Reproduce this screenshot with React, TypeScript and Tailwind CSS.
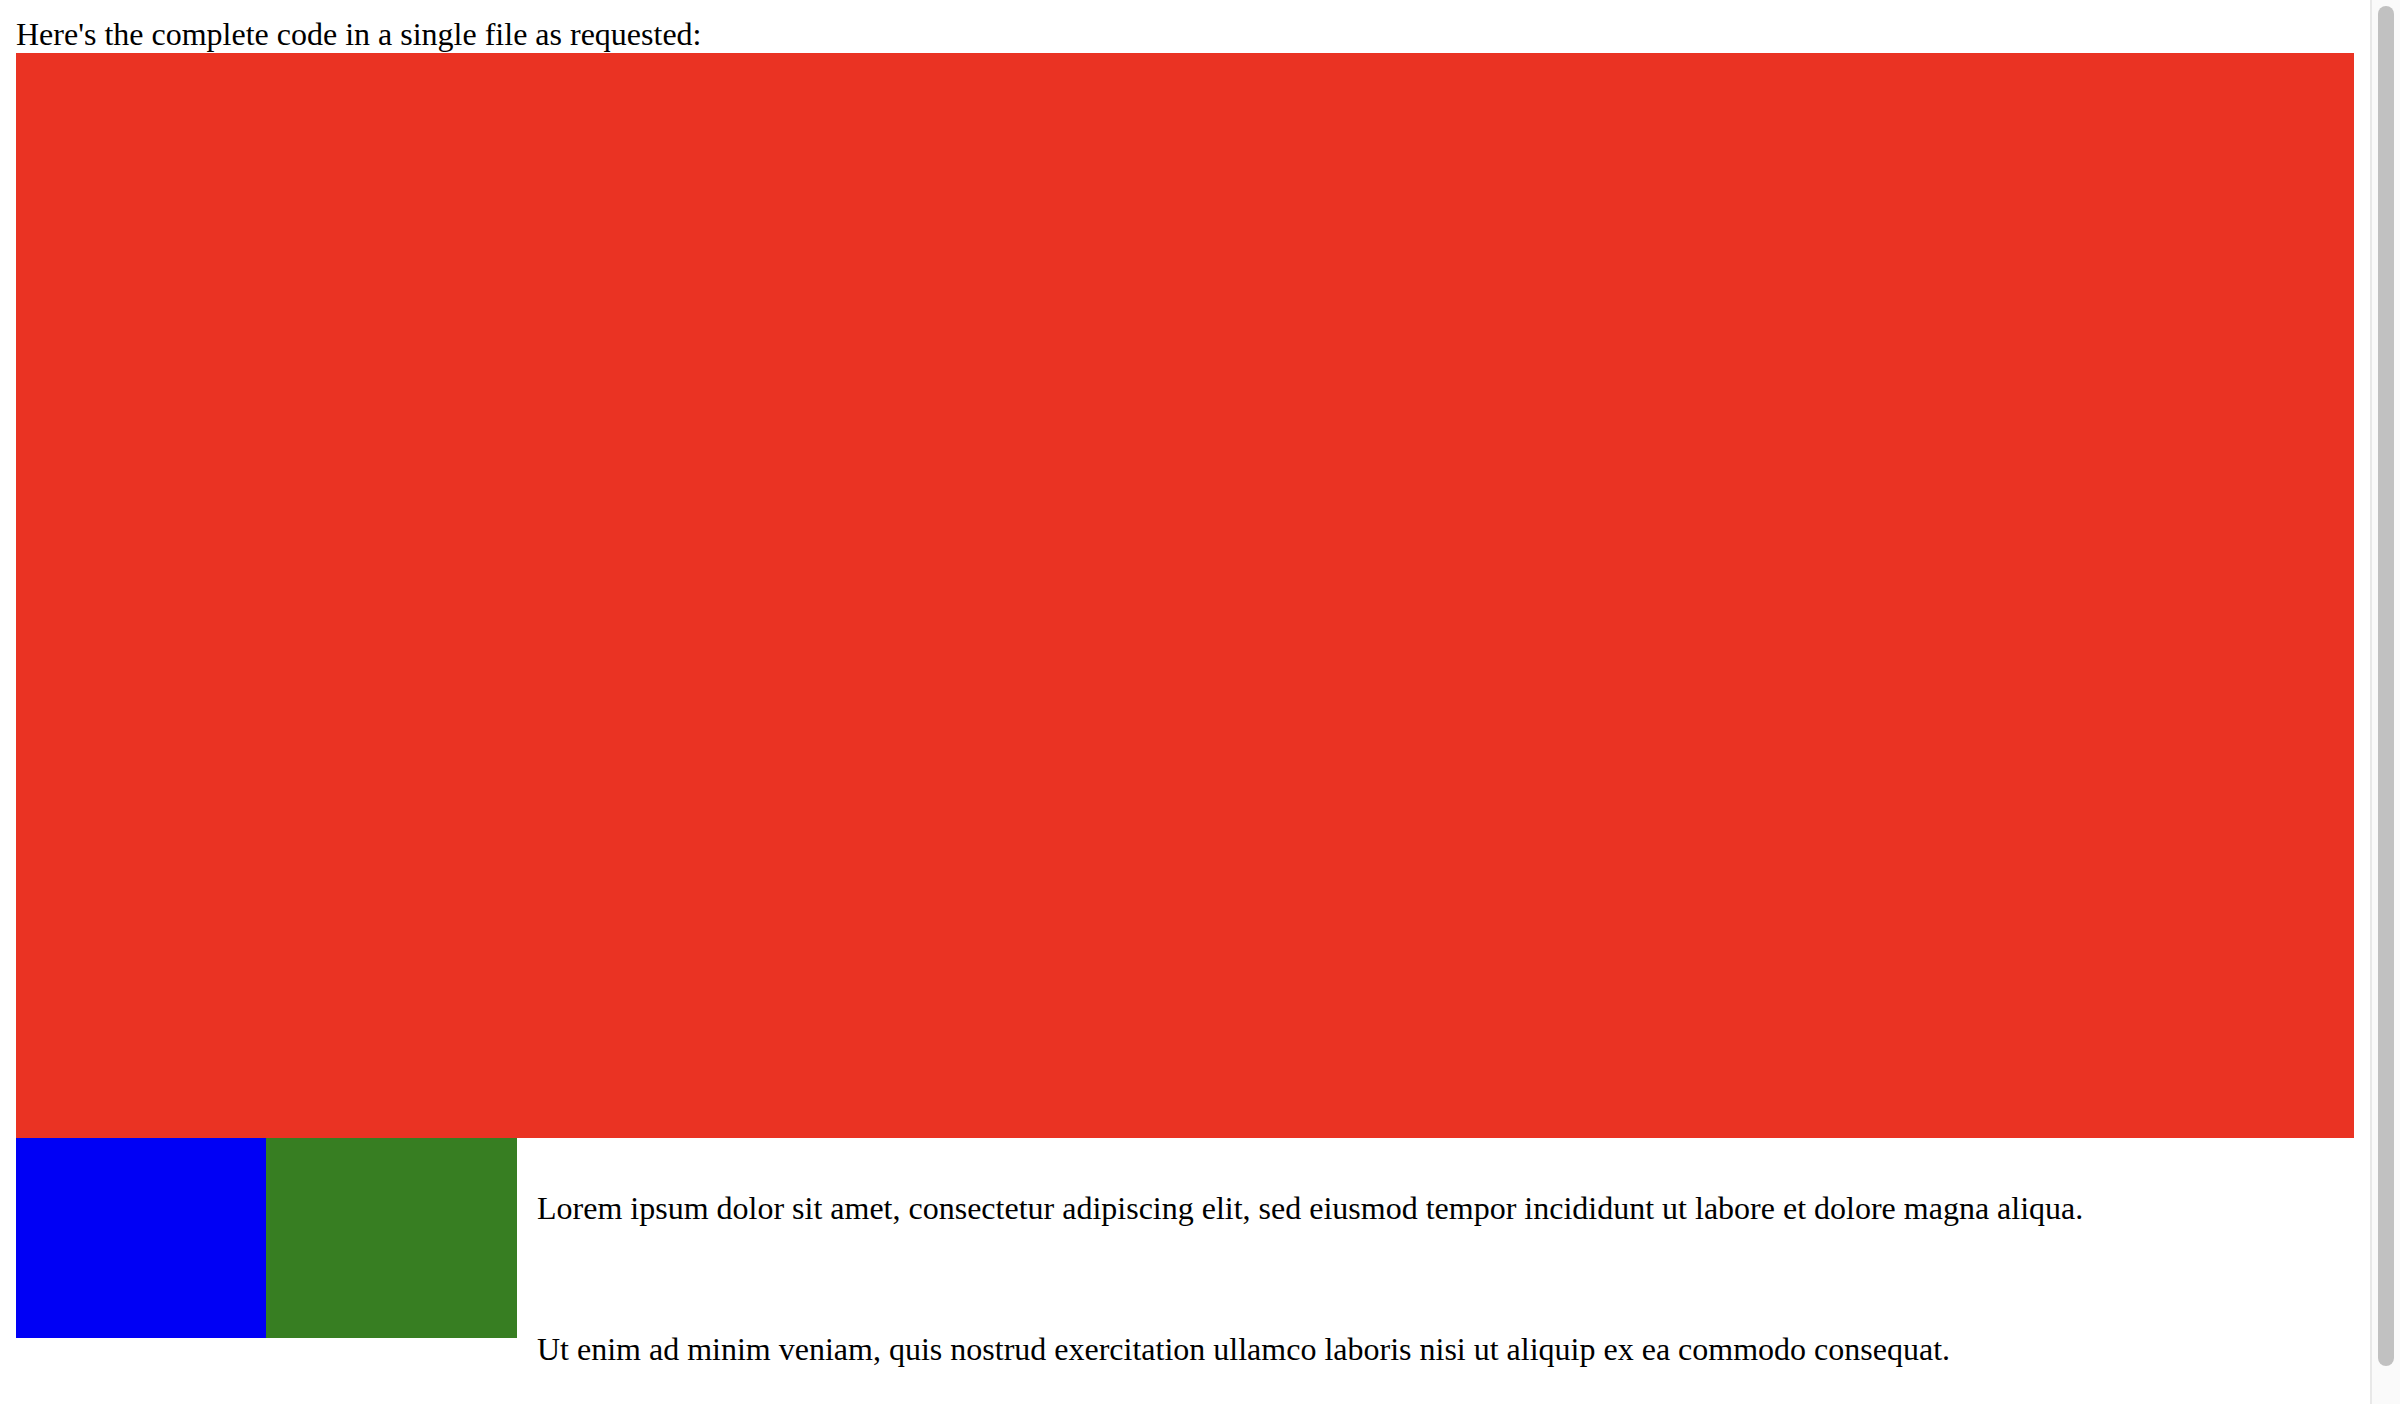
export default function App() {
  return (
    <div className="flex h-screen overflow-hidden bg-white text-black font-['Liberation_Serif',_'Times_New_Roman',_serif] text-[32px] leading-[normal]">
      <main className="flex-1 min-w-0 p-[16px]">
        <p>Here's the complete code in a single file as requested:</p>
        <div className="h-[1085px] bg-[#ea3323]" />
        <div className="flex items-start">
          <div className="w-[250px] h-[200px] shrink-0 bg-[#0000f5]" />
          <div className="w-[251px] h-[200px] shrink-0 bg-[#377e22]" />
          <div className="flex flex-col pl-[20px]">
            <p className="mt-[52px] leading-[37px]">
              Lorem ipsum dolor sit amet, consectetur adipiscing elit, sed eiusmod tempor incididunt ut labore et dolore magna aliqua.
            </p>
            <p className="mt-[104px] leading-[37px]">
              Ut enim ad minim veniam, quis nostrud exercitation ullamco laboris nisi ut aliquip ex ea commodo consequat.
            </p>
          </div>
        </div>
      </main>
      {/* scrollbar */}
      <aside className="w-[30px] shrink-0 border-l-2 border-[#e8e8e8] bg-[#fafafa] pt-[6px] pl-[6px]">
        <div className="w-[16px] h-[1360px] rounded-full bg-[#c1c1c1]" />
      </aside>
    </div>
  );
}
